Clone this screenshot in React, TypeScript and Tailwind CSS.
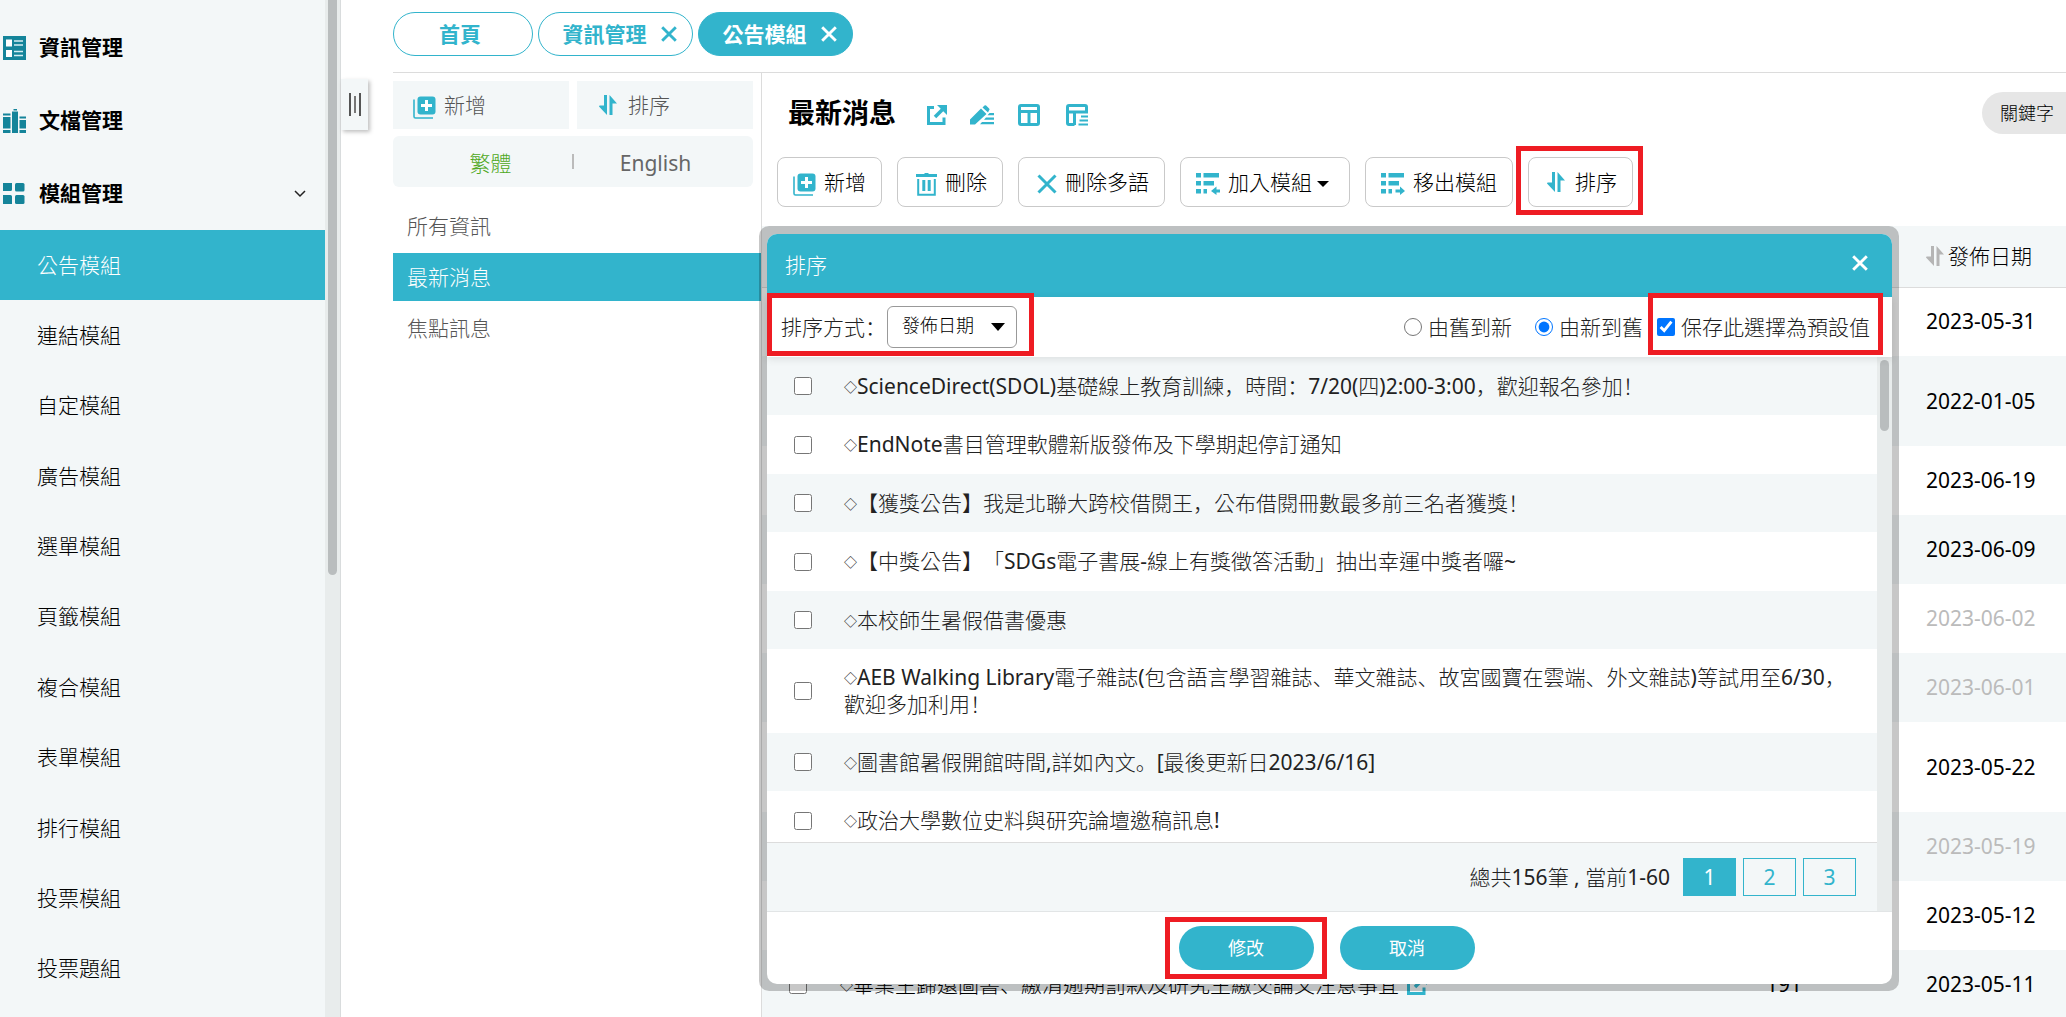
import type { ReactNode } from 'react';

const FONT = "font-['Noto_Sans','Noto_Sans_CJK_TC',sans-serif]";
const PUNCT_FONT = "font-['Noto_Sans_CJK_SC',sans-serif]";

/* Light Han text with regular-weight Latin, lower-left full-width punctuation and a small lozenge marker */
function Cjk({ text }: { text: string }) {
  return (
    <>
      {text.split(/([，：！、。]+|◇|[\x20-\x7e]+)/).map((part, i) => {
        if (part === '◇') return <span key={i} className="align-[2px] text-[13px] leading-none font-normal">◇</span>;
        if (/^[\x20-\x7e]+$/.test(part)) return <span key={i} className="font-normal">{part}</span>;
        if (i % 2) return <span key={i} lang="zh-CN" className={`${PUNCT_FONT} leading-none`}>{part}</span>;
        return part;
      })}
    </>
  );
}

function SortIcon({ className = 'text-[#32b4cc]' }: { className?: string }) {
  return (
    <svg viewBox="0 0 18 20" width="18" height="20" fill="currentColor" className={`shrink-0 ${className}`} aria-hidden="true">
      <path d="M5 0h3v20L0 11.500Q0 10.500 1 10.500h4z" />
      <path d="M10.500 0 18 8.500h-4.500V20h-3z" />
    </svg>
  );
}

function AddIcon() {
  return (
    <svg viewBox="0 0 23 23" width="23" height="23" className="mt-1 shrink-0 text-[#32b4cc]" aria-hidden="true">
      <path d="M1 3.500v17q0 1.500 1.500 1.500H20" fill="none" stroke="currentColor" strokeWidth="1.600" />
      <rect x="4.500" y="0.500" width="18" height="18" rx="3" fill="currentColor" />
      <path d="M13.500 4v11M8 9.500h11" stroke="#fff" strokeWidth="3" />
    </svg>
  );
}

function TrashIcon() {
  return (
    <svg viewBox="0 0 21 23" width="21" height="23" fill="none" stroke="currentColor" className="mt-1 shrink-0 text-[#32b4cc]" aria-hidden="true">
      <path d="M0 2.500h21" strokeWidth="3" />
      <path d="M8.500 1h4" strokeWidth="2" />
      <path d="M2.200 6v15.700h16.600V6" strokeWidth="2" />
      <path d="M7.800 7v11M13.200 7v11" strokeWidth="3" />
    </svg>
  );
}

function CrossIcon({ size = 20, width = 3, className = '' }: { size?: number; width?: number; className?: string }) {
  return (
    <svg viewBox="0 0 20 20" width={size} height={size} fill="none" stroke="currentColor" strokeWidth={width} className={`shrink-0 ${className}`} aria-hidden="true">
      <path d="M1.500 1.500l17 17M18.500 1.500l-17 17" />
    </svg>
  );
}

function ListArrowIcon({ out = false }: { out?: boolean }) {
  return (
    <svg viewBox="0 0 24 22" width="24" height="22" fill="currentColor" className="mt-1 shrink-0 text-[#32b4cc]" aria-hidden="true">
      <path d="M0 0h5v4.500H0zM7.500 0H23v4.500H7.500zM0 8h5v4.500H0zM7.500 8H18v4.500H7.500zM0 16h5v4.500H0zM7.500 16H11v4.500H7.500z" />
      {out ? (
        <path d="M14.500 16.500H19V13.500l5 4.500-5 4v-2.500h-4.500z" />
      ) : (
        <path d="M24 16.500H20.500V13.500L15 18l5.500 4v-2.500H24z" />
      )}
    </svg>
  );
}

function ExternalIcon() {
  return (
    <svg viewBox="0 0 20 20" width="20" height="20" fill="none" stroke="currentColor" className="shrink-0 text-[#32b4cc]" aria-hidden="true">
      <path d="M7 2.500H1.500v16H17V12.500" strokeWidth="3" />
      <path d="M8 12 16 4" strokeWidth="3.500" />
      <path d="M10 0H20v10z" fill="currentColor" stroke="none" />
    </svg>
  );
}

function PencilIcon() {
  return (
    <svg viewBox="0 0 24 20" width="24" height="20" fill="currentColor" className="shrink-0 text-[#32b4cc]" aria-hidden="true">
      <path d="M0 19.500v-5L11 3.500l5.500 5.500L5 19.500zM12.500 2.500 14.500.6q.8-.8 1.600 0l3 3q.8.800 0 1.600L18 7.500z" />
      <path d="M19.500 8h4.500v2.200h-6.500zM16 12.500H24V14.700H14zM12 17H24v2.200H10z" />
    </svg>
  );
}

function LayoutIcon() {
  return (
    <svg viewBox="0 0 22 22" width="22" height="22" fill="none" stroke="currentColor" strokeWidth="3" className="shrink-0 text-[#32b4cc]" aria-hidden="true">
      <rect x="1.500" y="1.500" width="19" height="19" rx="1.500" />
      <path d="M1 7.500h20M11 8.500v12" />
    </svg>
  );
}

function FormIcon() {
  return (
    <svg viewBox="0 0 22 22" width="22" height="22" fill="none" stroke="currentColor" strokeWidth="3" className="shrink-0 text-[#32b4cc]" aria-hidden="true">
      <path d="M8.500 20.500H3q-1.500 0-1.500-1.500V3q0-1.500 1.500-1.500h16q1.500 0 1.500 1.500v5H1.500M8.500 8v13" />
      <path d="M15 12.500H22M13.500 16.500H22M12.500 20.500H22" strokeWidth="2" />
    </svg>
  );
}

function InfoIcon() {
  return (
    <svg viewBox="0 0 23 24" width="23" height="24" aria-hidden="true">
      <path fill="#14849a" d="M0 0h23v24H0z" />
      <path fill="#fff" d="M3 3.500h6v7H3zM3 14h6v7H3z" />
      <path d="M11 5h9M11 9h9M11 15.500h9M11 19.500h9" stroke="#d5edf2" strokeWidth="1.600" />
    </svg>
  );
}

function DocsIcon() {
  return (
    <svg viewBox="0 0 23 24" width="23" height="24" fill="#14849a" aria-hidden="true">
      <path d="M0 4.500h7.500v2H0zM0 8h7.500v11.500H0zM0 21h7.500v3H0zM9 2.500h6V24H9zM10.500 0h3.500v1.500h-3.500zM16.500 7.500H23v2h-6.500zM16.500 11H23v8.500h-6.500zM16.500 21H23v3h-6.500z" />
    </svg>
  );
}

function ModulesIcon() {
  return (
    <svg viewBox="0 0 23 24" width="23" height="24" fill="#14849a" aria-hidden="true">
      <path d="M0 1h9v6.500q0 1.500-1.500 1.500H0zM0 13h7.500Q9 13 9 14.500V22H0z" />
      <rect x="12" y="1" width="9.500" height="8.500" rx="1.500" />
      <rect x="12" y="13" width="9.500" height="9" rx="1.500" />
    </svg>
  );
}

function Highlight({ className }: { className: string }) {
  return <span className={`pointer-events-none absolute z-20 border-5 border-[#ee1c23] ${className}`} />;
}

const modules = ['公告模組', '連結模組', '自定模組', '廣告模組', '選單模組', '頁籤模組', '複合模組', '表單模組', '排行模組', '投票模組', '投票題組'];

function Sidebar() {
  return (
    <aside className="flex h-full w-[341px] shrink-0 overflow-hidden border-r border-[#d9dcdd] bg-[#f3f7f8]">
      <nav className="min-w-0 flex-1">
        <ul className="pt-[11px] font-bold text-black">
          <li className="flex h-[73px] items-center gap-[13px] pl-[3px]"><InfoIcon /><a href="#info">資訊管理</a></li>
          <li className="flex h-[73px] items-center gap-[13px] pl-[3px]"><DocsIcon /><a href="#docs">文檔管理</a></li>
          <li className="flex h-[73px] items-center gap-[13px] pr-[19px] pl-[3px]">
            <ModulesIcon />
            <a href="#modules">模組管理</a>
            <svg viewBox="0 0 12 8" width="12" height="8" fill="none" stroke="#222" strokeWidth="1.500" className="ml-auto" aria-hidden="true">
              <path d="M1 1l5 5 5-5" />
            </svg>
          </li>
        </ul>
        <ul className="grid h-[774px] auto-rows-fr">
          {modules.map((m, i) => (
            <li key={m} className={i === 0 ? 'flex bg-[#32b4cc] text-white' : 'flex text-black'}>
              <a href={`#module-${i}`} className="flex flex-1 items-center pl-[37px]">{m}</a>
            </li>
          ))}
        </ul>
      </nav>
      <div className="flex w-[15px] justify-center bg-[#e8ecec]">
        <div className="h-[575px] w-[9px] rounded-b-full bg-[#b9bdbe]" />
      </div>
    </aside>
  );
}

function Tabs() {
  const pill = 'flex h-11 items-center justify-center rounded-full border border-[#32b4cc] font-bold';
  return (
    <div className="flex gap-[5px] border-b border-[#dcdcdc] pt-3 pb-4">
      <button className={`${pill} w-[140px] pr-[6px] text-[#32b4cc]`}>首頁</button>
      <button className={`${pill} w-[155px] gap-[14px] pl-2 text-[#32b4cc]`}>資訊管理<CrossIcon size={16} width={3.6} /></button>
      <button className={`${pill} w-[155px] gap-[14px] bg-[#32b4cc] pl-2 text-white`}>公告模組<CrossIcon size={16} width={3.6} /></button>
    </div>
  );
}

function CategoryPanel() {
  const action = 'flex h-12 items-center bg-[#f3f7f8]';
  return (
    <section className="w-[369px] shrink-0 border-r border-[#dcdcdc] pt-2 text-[#555]">
      <div className="grid grid-cols-2 gap-2 pr-2">
        <button className={`${action} gap-2 pl-5`}><AddIcon />新增</button>
        <button className={`${action} gap-[11px] pl-[22px]`}><SortIcon />排序</button>
      </div>
      <div className="mt-[7px] mr-2 grid h-[51px] grid-cols-[1fr_2px_1fr] items-center rounded-md bg-[#f3f7f8]">
        <button className="pt-1 pl-4 text-[#4fa823]">繁體</button>
        <span className="h-[15px] bg-[#bbb]" />
        <button className="pt-1 pr-4 font-normal text-[#666]">English</button>
      </div>
      <ul className="mt-[15px] flex flex-col gap-[3px]">
        {['所有資訊', '最新消息', '焦點訊息'].map((c, i) => (
          <li key={c} className={i === 1 ? 'flex h-12 bg-[#32b4cc] text-white' : 'flex h-12'}>
            <a href={`#category-${i}`} className="flex flex-1 items-center pl-[14px]">{c}</a>
          </li>
        ))}
      </ul>
    </section>
  );
}

function ToolButton({ icon, children, className }: { icon: ReactNode; children: ReactNode; className: string }) {
  return (
    <button className={`flex h-[50px] items-center gap-2 rounded-lg border border-[#c9c9c9] bg-white whitespace-nowrap text-black ${className}`}>
      {icon}
      {children}
    </button>
  );
}

const newsRows = [
  { date: '2023-05-31' },
  { date: '2022-01-05', tall: true },
  { date: '2023-06-19' },
  { date: '2023-06-09' },
  { date: '2023-06-02', off: true },
  { date: '2023-06-01', off: true },
  { date: '2023-05-22', tall: true },
  { date: '2023-05-19', off: true },
  { date: '2023-05-12' },
  { date: '2023-05-11', title: '◇畢業生歸還圖書、繳清逾期罰款及研究生繳交論文注意事宜', hits: 191 },
];

function NewsTable() {
  return (
    <table className="mt-[19px] w-full table-fixed border-collapse text-black">
      <thead>
        <tr className="h-[61px] border-b border-[#dcdcdc] bg-[#f3f7f8]">
          <th className="w-[72px]" />
          <th />
          <th className="w-[200px]" />
          <th className="w-[146px] font-light">
            <span className="flex items-center gap-1 pl-[6px]"><SortIcon className="text-[#b5b5b5]" />發佈日期</span>
          </th>
        </tr>
      </thead>
      <tbody>
        {newsRows.map((r) => (
          <tr key={r.date} className={`even:bg-[#f3f7f8] ${r.tall ? 'h-[90px]' : 'h-[69px]'} ${r.off ? 'text-[#bbb]' : ''}`}>
            <td className="pl-[27px] align-middle">
              {r.title && <input type="checkbox" aria-label={r.title} className="block size-[18px]" />}
            </td>
            <td className="pl-[6px]">
              {r.title && (
                <a href="#news" className="flex items-center gap-2 whitespace-nowrap">
                  <span><Cjk text={r.title} /></span>
                  <ExternalIcon />
                </a>
              )}
            </td>
            <td className="pr-[118px] text-right font-normal">{r.hits}</td>
            <td className="pl-[6px] font-normal whitespace-nowrap">{r.date}</td>
          </tr>
        ))}
      </tbody>
    </table>
  );
}

const sortRows = [
  '◇ScienceDirect(SDOL)基礎線上教育訓練，時間：7/20(四)2:00-3:00，歡迎報名參加！',
  '◇EndNote書目管理軟體新版發佈及下學期起停訂通知',
  '◇【獲獎公告】我是北聯大跨校借閱王，公布借閱冊數最多前三名者獲獎！',
  '◇【中獎公告】「SDGs電子書展-線上有獎徵答活動」抽出幸運中獎者囉~',
  '◇本校師生暑假借書優惠',
  '◇AEB Walking Library電子雜誌(包含語言學習雜誌、華文雜誌、故宮國寶在雲端、外文雜誌)等試用至6/30，歡迎多加利用！',
  '◇圖書館暑假開館時間,詳如內文。[最後更新日2023/6/16]',
  '◇政治大學數位史料與研究論壇邀稿訊息!',
];

function SortDialog() {
  return (
    <div role="dialog" aria-label="排序" className="absolute top-[153px] right-[167px] bottom-[26px] -left-[3px] z-10 rounded-[10px] bg-black/22 p-2 pr-[7px] pb-[7px] text-[#222]">
      <div className="flex h-full flex-col rounded-[10px] bg-white">
        <header className="flex h-[63px] shrink-0 items-center justify-between rounded-t-[10px] bg-[#32b4cc] pr-6 pl-[18px] text-white">
          <h2>排序</h2>
          <button aria-label="關閉" className="-mt-1.5"><CrossIcon size={16} width={3.6} /></button>
        </header>
        <div className="relative z-10 flex h-[60px] shrink-0 items-center bg-white pr-[22px] pl-[14px] shadow-[0_2px_8px_rgba(0,0,0,0.1)]">
          <Highlight className="-top-[4px] left-0 h-[63px] w-[267px]" />
          <label htmlFor="sort-by" className="w-[106px]"><Cjk text="排序方式：" /></label>
          <span className="relative flex items-center">
            <select id="sort-by" className="h-[42px] w-[130px] appearance-none rounded-md border border-[#999] bg-white pb-1 pl-[14px] text-lg leading-6 text-black">
              <option>發佈日期</option>
            </select>
            <svg viewBox="0 0 14 8" width="14" height="8" className="pointer-events-none absolute right-3" aria-hidden="true"><path d="M0 0h14L7 8z" /></svg>
          </span>
          <label className="ml-auto flex items-center gap-[6px]"><input type="radio" name="order" className="size-[18px]" />由舊到新</label>
          <label className="ml-[23px] flex items-center gap-[6px]"><input type="radio" name="order" defaultChecked className="size-[18px]" />由新到舊</label>
          <label className="relative ml-[14px] flex items-center gap-[6px]">
            <Highlight className="-top-[21px] -right-[13px] -left-[9px] h-[62px]" />
            <input type="checkbox" defaultChecked className="size-[18px]" />保存此選擇為預設值
          </label>
        </div>
        <div className="flex min-h-0 flex-1">
          <div className="flex min-w-0 flex-1 flex-col">
            <ul className="min-h-0 flex-1 overflow-hidden">
              {sortRows.map((t) => (
                <li key={t} className="flex items-center py-[15px] [text-spacing-trim:space-all] odd:min-h-[58px] odd:bg-[#f3f7f8] even:min-h-[59px]">
                  <label className="flex items-center gap-8 pr-[30px] pl-[27px] leading-[27px]">
                    <input type="checkbox" className="size-[18px] shrink-0" />
                    <span><Cjk text={t} /></span>
                  </label>
                </li>
              ))}
            </ul>
            <div className="flex h-[69px] items-center justify-end gap-[7px] border-t border-[#dcdcdc] bg-[#f3f7f8] pr-[21px]">
              <span className="mr-[6px]"><Cjk text="總共156筆 , 當前1-60" /></span>
              <button className="h-[38px] w-[53px] border border-[#32b4cc] bg-[#32b4cc] font-normal text-white">1</button>
              <button className="h-[38px] w-[53px] border border-[#32b4cc] font-normal text-[#32b4cc]">2</button>
              <button className="h-[38px] w-[53px] border border-[#32b4cc] font-normal text-[#32b4cc]">3</button>
            </div>
          </div>
          <div className="w-[15px] bg-[#e8ecec] px-[3px] pt-[3px]">
            <div className="h-[71px] rounded-full bg-[#b9bdbe]" />
          </div>
        </div>
        <footer className="flex h-[73px] shrink-0 items-center justify-center gap-[26px] border-t border-[#e2e5e6] pr-1.5 text-lg font-normal text-white">
          <span className="relative">
            <Highlight className="-top-[9px] -right-[13px] -left-[14px] h-[62px]" />
            <button className="h-11 w-[135px] rounded-full bg-[#32b4cc]">修改</button>
          </span>
          <button className="h-11 w-[135px] rounded-full bg-[#32b4cc]">取消</button>
        </footer>
      </div>
    </div>
  );
}

function NewsPanel() {
  return (
    <section className="relative min-w-0 flex-1">
      <div className="flex items-center pt-[19px] pl-[26px]">
        <h1 className="text-[27px] leading-[42px] font-bold text-black">最新消息</h1>
        <div className="mt-[3px] ml-[31px] flex items-center gap-6">
          <button aria-label="開啟連結"><ExternalIcon /></button>
          <button aria-label="編輯" className="-ml-px"><PencilIcon /></button>
          <button aria-label="版面"><LayoutIcon /></button>
          <button aria-label="表單" className="ml-[2px]"><FormIcon /></button>
        </div>
        <div className="ml-auto flex h-[42px] w-[84px] items-center rounded-l-full bg-[#e6e6e6] pl-[18px] text-lg whitespace-nowrap text-black">關鍵字</div>
      </div>
      <div className="flex gap-[15px] pt-[23px] pl-[15px]">
        <ToolButton className="w-[105px] pl-[15px]" icon={<AddIcon />}>新增</ToolButton>
        <ToolButton className="w-[106px] pl-[18px]" icon={<TrashIcon />}>刪除</ToolButton>
        <ToolButton className="w-[147px] pl-[18px]" icon={<CrossIcon className="mt-1 text-[#32b4cc]" />}>刪除多語</ToolButton>
        <ToolButton className="w-[170px] pl-[15px]" icon={<ListArrowIcon />}>
          <span className="flex items-center gap-[5px]">
            加入模組
            <svg viewBox="0 0 12 6" width="12" height="6" className="mt-1" aria-hidden="true"><path d="M0 0h12L6 6z" /></svg>
          </span>
        </ToolButton>
        <ToolButton className="w-[148px] pl-[15px]" icon={<ListArrowIcon out />}>移出模組</ToolButton>
        <span className="relative">
          <Highlight className="-top-[11px] -right-[10px] -bottom-[8px] -left-[12px]" />
          <ToolButton className="w-[105px] pl-[18px]" icon={<SortIcon className="mr-[2px] text-[#32b4cc]" />}>排序</ToolButton>
        </span>
      </div>
      <NewsTable />
      <SortDialog />
    </section>
  );
}

export default function App() {
  return (
    <div lang="zh-TW" className={`${FONT} flex h-screen overflow-hidden bg-white text-[21px] leading-[27px] font-light`}>
      <Sidebar />
      <div className="relative flex min-w-0 flex-1 flex-col pl-[52px]">
        <button aria-label="收合選單" className="absolute top-[79px] left-0 flex h-[51px] w-[27px] items-center justify-center gap-[3px] bg-[#f3f7f8] shadow-[2px_2px_4px_rgba(0,0,0,0.25)]">
          <span className="h-[23px] w-[2px] bg-[#555]" />
          <span className="h-[17px] w-[2px] bg-[#777]" />
          <span className="h-[23px] w-[2px] bg-[#555]" />
        </button>
        <Tabs />
        <div className="flex min-h-0 flex-1">
          <CategoryPanel />
          <NewsPanel />
        </div>
      </div>
    </div>
  );
}
